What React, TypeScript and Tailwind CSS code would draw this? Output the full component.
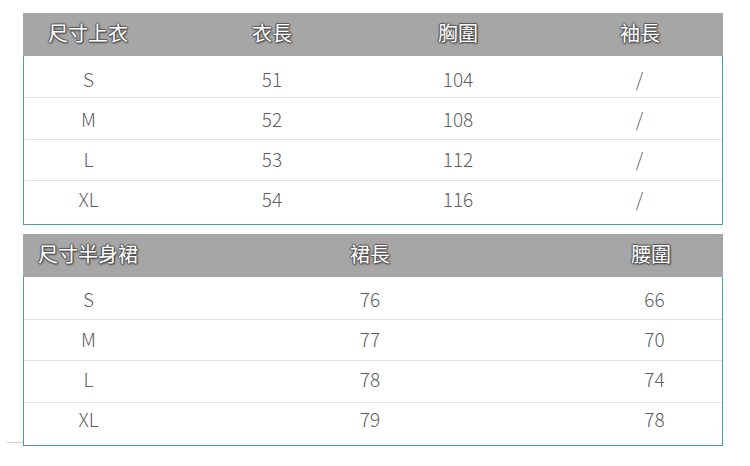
const FONT = "font-['Noto_Sans_CJK_TC','Noto_Sans',sans-serif]";

// heights / top padding tuned so the numbers sit on an even 40px rhythm
const TOP_ROWS = [
  { cells: ["S", "51", "104", "/"], h: "h-[41px]", pt: "pt-[13px]" },
  { cells: ["M", "52", "108", "/"], h: "h-[42px]", pt: "pt-[11px]" },
  { cells: ["L", "53", "112", "/"], h: "h-[41px]", pt: "pt-[9px]" },
  { cells: ["XL", "54", "116", "/"], h: "h-[44px]", pt: "pt-[8px]" },
];

const SKIRT_ROWS = [
  { cells: ["S", "76", "66"], h: "h-[42px]", pt: "pt-[12px]" },
  { cells: ["M", "77", "70"], h: "h-[41px]", pt: "pt-[9px]" },
  { cells: ["L", "78", "74"], h: "h-[42px]", pt: "pt-[8px]" },
  { cells: ["XL", "79", "78"], h: "h-[43px]", pt: "pt-[6px]" },
];

const headText =
  "text-[20px] leading-none text-white [text-shadow:1px_0_1px_#555,-1px_0_1px_#555,0_1px_1px_#555,0_-1px_1px_#555,1px_1px_2px_#3f3f3f]";

const cellText = "text-[19px] font-light leading-[20px] text-[#5f5f5f]";

function TopTable() {
  return (
    <div className="w-[700px]">
      <div className="grid h-[43px] grid-cols-[130px_238px_134px_198px] items-center bg-[#a6a6a6] pb-1">
        <span className={`text-center ${headText}`}>尺寸上衣</span>
        <span className={`text-center ${headText}`}>衣長</span>
        <span className={`text-center ${headText}`}>胸圍</span>
        <span className={`pl-[32px] text-center ${headText}`}>袖長</span>
      </div>
      <div className="border-x border-b border-[#4c9f99]">
        {TOP_ROWS.map((row, i) => (
          <div
            key={row.cells[0]}
            className={`grid grid-cols-[129px_238px_134px_197px] items-start ${row.h} ${row.pt} ${cellText} ${
              i > 0 ? "border-t border-[#e2e2e2]" : ""
            }`}
          >
            <span className="text-center">{row.cells[0]}</span>
            <span className="text-center">{row.cells[1]}</span>
            <span className="text-center">{row.cells[2]}</span>
            <span className="pl-[32px] text-center">{row.cells[3]}</span>
          </div>
        ))}
      </div>
    </div>
  );
}

function SkirtTable() {
  return (
    <div className="relative w-[700px]">
      <div className="grid h-[43px] grid-cols-[130px_434px_136px] items-center bg-[#a6a6a6] pb-1">
        <span className={`text-center ${headText}`}>尺寸半身裙</span>
        <span className={`text-center ${headText}`}>裙長</span>
        <span className={`pr-[8px] text-center ${headText}`}>腰圍</span>
      </div>
      <div className="border-x border-b border-[#4c9f99]">
        {SKIRT_ROWS.map((row, i) => (
          <div
            key={row.cells[0]}
            className={`grid grid-cols-[129px_434px_135px] items-start ${row.h} ${row.pt} ${cellText} ${
              i > 0 ? "border-t border-[#e2e2e2]" : ""
            }`}
          >
            <span className="text-center">{row.cells[0]}</span>
            <span className="text-center">{row.cells[1]}</span>
            <span className="text-center">{row.cells[2]}</span>
          </div>
        ))}
      </div>
      {/* stray rule left of the table */}
      <div className="absolute bottom-[3px] left-[-16px] h-px w-4 bg-[#cfcfcf]" />
    </div>
  );
}

export default function App() {
  return (
    <div className={`h-[466px] w-[750px] bg-white pl-[23px] pt-[13px] ${FONT}`}>
      <TopTable />
      <div className="mt-[9px]">
        <SkirtTable />
      </div>
    </div>
  );
}
